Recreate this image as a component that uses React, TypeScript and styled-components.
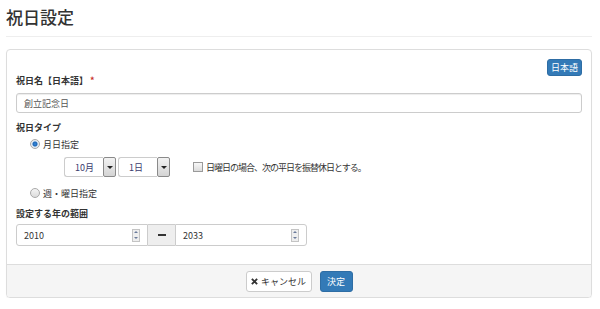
import styled, { createGlobalStyle } from 'styled-components';

const GlobalStyle = createGlobalStyle`
  body {
    margin: 0;
    background: #fff;
    color: #333;
    font-family: "Noto Sans CJK JP", "Liberation Sans", sans-serif;
  }
`;

const Page = styled.div`
  width: 600px;
  padding: 0 8px 0 6px;
  box-sizing: border-box;
`;

const Title = styled.h1`
  margin: 0;
  padding-top: 6px;
  font-size: 17px;
  font-weight: 500;
  line-height: 22px;
  color: #333;
`;

const Divider = styled.div`
  margin-top: 8px;
  border-top: 1px solid #eee;
`;

const Panel = styled.div`
  margin-top: 12px;
  width: 586px;
  border: 1px solid #ddd;
  border-radius: 4px;
  box-shadow: 0 1px 1px rgba(0, 0, 0, 0.05);
  box-sizing: border-box;
`;

const PanelBody = styled.div`
  padding: 9px 9px 18px;
  display: flex;
  flex-direction: column;
`;

const LangRow = styled.div`
  display: flex;
  justify-content: flex-end;
`;

const Button = styled.button<{ $primary?: boolean; $w: number }>`
  width: ${(p) => p.$w}px;
  height: 21px;
  padding: 0;
  display: flex;
  align-items: center;
  justify-content: center;
  gap: 3px;
  border-radius: 3px;
  font-family: inherit;
  font-size: 9px;
  cursor: pointer;
  background: ${(p) => (p.$primary ? '#337ab7' : '#fff')};
  border: 1px solid ${(p) => (p.$primary ? '#2e6da4' : '#ccc')};
  color: ${(p) => (p.$primary ? '#fff' : '#333')};
`;

const LangButton = styled(Button)`
  height: 17px;
`;

const Label = styled.div<{ $mt: number }>`
  margin-top: ${(p) => p.$mt}px;
  font-size: 9px;
  font-weight: 700;
  line-height: 12px;
  color: #333;

  span {
    color: #c9302c;
    margin-left: 2px;
  }
`;

const TextInput = styled.div`
  margin-top: 6px;
  height: 20px;
  border: 1px solid #ccc;
  border-radius: 3px;
  box-shadow: inset 0 1px 1px rgba(0, 0, 0, 0.075);
  box-sizing: border-box;
  display: flex;
  align-items: center;
  padding-left: 7px;
  font-size: 9px;
  color: #555;
`;

const RadioRow = styled.label<{ $mt: number }>`
  margin-top: ${(p) => p.$mt}px;
  margin-left: 14px;
  display: flex;
  align-items: center;
  gap: 3px;
  height: 12px;
  font-size: 9px;
  color: #333;
`;

const RadioDot = styled.span<{ $checked?: boolean }>`
  width: 10px;
  height: 10px;
  border-radius: 50%;
  border: 1px solid #a9a9a9;
  box-sizing: border-box;
  background: ${(p) =>
    p.$checked
      ? 'radial-gradient(circle, #3b8ee0 0, #1d65b5 2px, #d6e6f5 3px, #f0f0f0 4px)'
      : 'linear-gradient(#f4f4f4, #dcdcdc)'};
`;

const DateRow = styled.div`
  margin-top: 7px;
  margin-left: 48px;
  height: 20px;
  display: flex;
  align-items: center;
`;

const Select = styled.div`
  display: flex;
  height: 20px;
  margin-right: 2px;
`;

const SelectValue = styled.div`
  width: 39px;
  box-sizing: border-box;
  border: 1px solid #ccc;
  border-right: none;
  border-radius: 3px 0 0 3px;
  display: flex;
  align-items: center;
  padding-left: 10px;
  font-size: 9px;
  color: #3c3c6e;
`;

const SelectArrow = styled.div`
  width: 13px;
  box-sizing: border-box;
  border: 1px solid #8a8a8a;
  border-radius: 2px;
  background: linear-gradient(#f2f2f2, #d4d4d4);
  display: flex;
  align-items: center;
  justify-content: center;

  &::after {
    content: '';
    border-left: 3px solid transparent;
    border-right: 3px solid transparent;
    border-top: 3px solid #222;
  }
`;

const CheckLabel = styled.label`
  margin-left: 21px;
  display: flex;
  align-items: center;
  gap: 3px;
  font-size: 9px;
  letter-spacing: -1px;
  color: #333;
`;

const CheckBox = styled.span`
  width: 10px;
  height: 10px;
  box-sizing: border-box;
  border: 1px solid #9a9a9a;
  background: linear-gradient(#f8f8f8, #dcdcdc);
`;

const InputGroup = styled.div`
  margin-top: 4px;
  width: 291px;
  height: 22px;
  display: flex;
`;

const YearInput = styled.div<{ $side: 'left' | 'right' }>`
  flex: 1;
  border: 1px solid #ccc;
  box-sizing: border-box;
  border-radius: ${(p) => (p.$side === 'left' ? '3px 0 0 3px' : '0 3px 3px 0')};
  display: flex;
  align-items: center;
  justify-content: space-between;
  padding: 0 7px 0 7px;
  font-size: 9px;
  color: #333;
`;

const Spinner = styled.span`
  width: 8px;
  height: 13px;
  box-sizing: border-box;
  border: 1px solid #c4c4c4;
  background: #eee;
  display: flex;
  flex-direction: column;
  align-items: center;
  justify-content: space-around;

  &::before,
  &::after {
    content: '';
    border-left: 2px solid transparent;
    border-right: 2px solid transparent;
  }
  &::before {
    border-bottom: 2px solid #6a7a9a;
  }
  &::after {
    border-top: 2px solid #6a7a9a;
  }
`;

const Addon = styled.div`
  width: 27px;
  background: #eee;
  border-top: 1px solid #ccc;
  border-bottom: 1px solid #ccc;
  box-sizing: border-box;
  display: flex;
  align-items: center;
  justify-content: center;

  &::after {
    content: '';
    width: 8px;
    height: 2px;
    background: #333;
  }
`;

const Footer = styled.div`
  height: 33px;
  padding-top: 6px;
  box-sizing: border-box;
  background: #f5f5f5;
  border-top: 1px solid #ddd;
  border-radius: 0 0 3px 3px;
  display: flex;
  justify-content: center;
  gap: 8px;
`;

const XIcon = () => (
  <svg width="7" height="7" viewBox="0 0 8 8">
    <path d="M1 1L7 7M7 1L1 7" stroke="#333" strokeWidth="2.2" />
  </svg>
);

export default function App() {
  return (
    <Page>
      <GlobalStyle />
      <Title>祝日設定</Title>
      <Divider />
      <Panel>
        <PanelBody>
          <LangRow>
            <LangButton $primary $w={35}>日本語</LangButton>
          </LangRow>
          <Label $mt={-1}>
            祝日名【日本語】<span>*</span>
          </Label>
          <TextInput>創立記念日</TextInput>
          <Label $mt={9}>祝日タイプ</Label>
          <RadioRow $mt={4}>
            <RadioDot $checked />
            月日指定
          </RadioRow>
          <DateRow>
            <Select>
              <SelectValue>10月</SelectValue>
              <SelectArrow />
            </Select>
            <Select>
              <SelectValue>1日</SelectValue>
              <SelectArrow />
            </Select>
            <CheckLabel>
              <CheckBox />
              日曜日の場合、次の平日を振替休日とする。
            </CheckLabel>
          </DateRow>
          <RadioRow $mt={10}>
            <RadioDot />
            週・曜日指定
          </RadioRow>
          <Label $mt={9}>設定する年の範囲</Label>
          <InputGroup>
            <YearInput $side="left">
              2010
              <Spinner />
            </YearInput>
            <Addon />
            <YearInput $side="right">
              2033
              <Spinner />
            </YearInput>
          </InputGroup>
        </PanelBody>
        <Footer>
          <Button $w={66}>
            <XIcon />
            キャンセル
          </Button>
          <Button $primary $w={33}>決定</Button>
        </Footer>
      </Panel>
    </Page>
  );
}
